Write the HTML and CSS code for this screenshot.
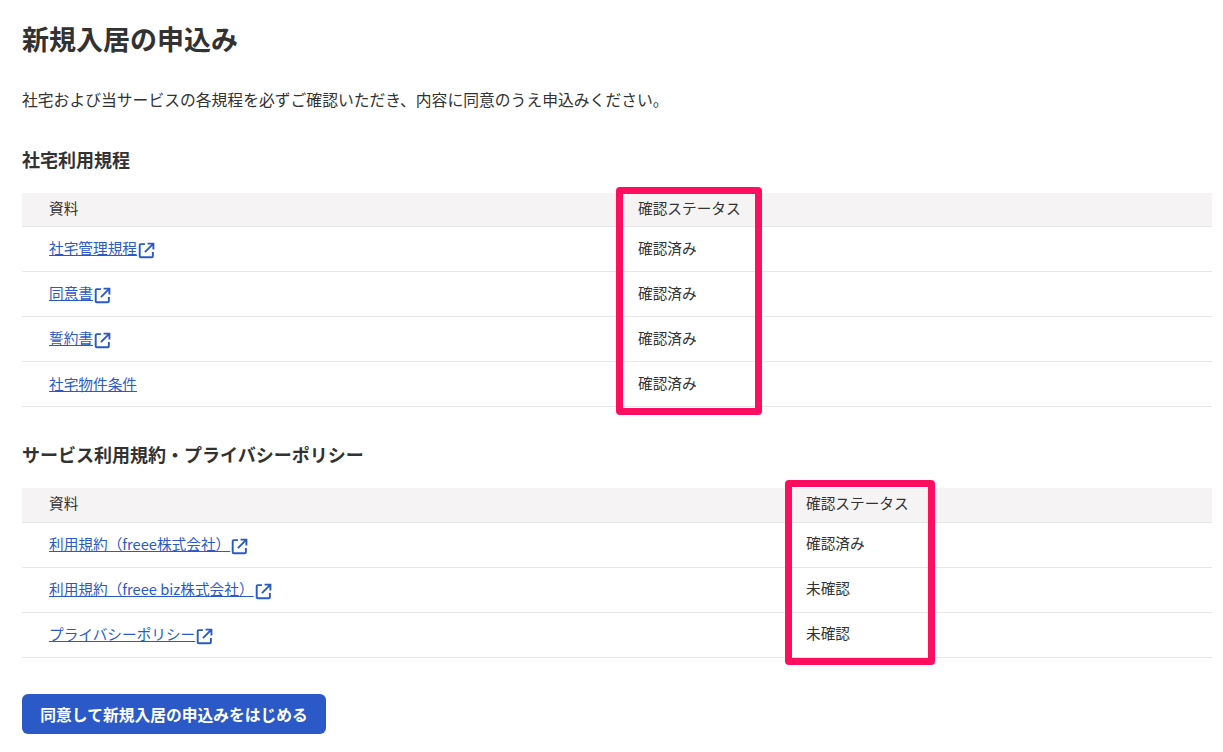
FILE: index.html
```html
<!DOCTYPE html>
<html lang="ja">
<head>
<meta charset="utf-8">
<title>新規入居の申込み</title>
<link rel="stylesheet" href="styles.css">
</head>
<body>
<svg class="defs" width="0" height="0" aria-hidden="true"><symbol id="ext" viewBox="0 0 16 16"><path d="M6.500 2H2.600a1 1 0 0 0-1 1v10.400a1 1 0 0 0 1 1H13a1 1 0 0 0 1-1V9.500" fill="none" stroke="currentColor" stroke-width="1.800"/><path d="M6.500 9.500 13.800 2.200M9 1.500h5.500V7" fill="none" stroke="currentColor" stroke-width="1.800"/></symbol></svg>
<main class="page">
  <h1 class="title">新規入居の申込み</h1>
  <p class="lead">社宅および当サービスの各規程を必ずご確認いただき、内容に同意のうえ申込みください。</p>

  <h2 class="section-title first">社宅利用規程</h2>
  <table class="docs docs-a">
    <thead><tr><th class="c1">資料</th><th class="c2"><span class="status">確認ステータス</span></th></tr></thead>
    <tbody>
      <tr><td class="c1"><a href="#">社宅管理規程</a><svg class="ext"><use href="#ext"/></svg></td><td class="c2">確認済み</td></tr>
      <tr><td class="c1"><a href="#">同意書</a><svg class="ext"><use href="#ext"/></svg></td><td class="c2">確認済み</td></tr>
      <tr><td class="c1"><a href="#">誓約書</a><svg class="ext"><use href="#ext"/></svg></td><td class="c2">確認済み</td></tr>
      <tr><td class="c1"><a href="#">社宅物件条件</a></td><td class="c2">確認済み</td></tr>
    </tbody>
  </table>
  <div class="mark mark-a"></div>

  <h2 class="section-title second">サービス利用規約・プライバシーポリシー</h2>
  <table class="docs docs-b">
    <thead><tr><th class="c1">資料</th><th class="c2"><span class="status">確認ステータス</span></th></tr></thead>
    <tbody>
      <tr><td class="c1"><a href="#">利用規約（freee株式会社）</a><svg class="ext"><use href="#ext"/></svg></td><td class="c2">確認済み</td></tr>
      <tr><td class="c1"><a href="#">利用規約（freee biz株式会社）</a><svg class="ext"><use href="#ext"/></svg></td><td class="c2">未確認</td></tr>
      <tr><td class="c1"><a href="#">プライバシーポリシー</a><svg class="ext"><use href="#ext"/></svg></td><td class="c2">未確認</td></tr>
    </tbody>
  </table>
  <div class="mark mark-b"></div>

  <button class="primary" type="button">同意して新規入居の申込みをはじめる</button>
</main>
</body>
</html>
```
FILE: styles.css
```css
html, body { margin: 0; padding: 0; background: #fff; }
body {
  font-family: "Noto Sans CJK JP", "Noto Sans", sans-serif;
  color: #323232;
  font-size: 14.67px;
  overflow: hidden;
}
.defs { position: absolute; }
.page { position: relative; height: 752px; box-sizing: border-box; padding: 21px 11px 0 22px; }
.title { margin: 0; font-size: 27px; line-height: 36px; font-weight: 700; }
.lead { margin: 25px 0 0; font-size: 15.8px; line-height: 35px; height: 36px; white-space: nowrap; }
.section-title { margin: 0; font-size: 18px; line-height: 24px; font-weight: 700; }
.section-title.first { margin-top: 29px; }
.section-title.second { margin-top: 35px; }
.docs { width: 100%; border-collapse: separate; border-spacing: 0; table-layout: fixed; margin-top: 22px; }
.docs th, .docs td { padding: 0 0 4px; text-align: left; font-weight: 400; font-size: 14.67px; border-bottom: 1px solid #e8e6e6; box-sizing: border-box; }
.docs th { height: 34px; background: #f5f3f3; line-height: 20px; }
.docs td { height: 45px; }
.docs td.c1 { padding-bottom: 2px; }
.docs-b td.c1 { padding-bottom: 3px; }
.docs-b td.c2 { padding-bottom: 6px; }
.docs .c1 { padding-left: 27px; }
.docs .c2 { padding-left: 8px; }
.docs-a .c1 { width: 608px; }
.docs-b .c1 { width: 776px; }
.docs-b th { height: 35px; }
a { color: #2b5ac8; text-decoration: underline; }
.ext { width: 17px; height: 17px; margin-left: 1px; color: #2b5ac8; vertical-align: -5px; }
.mark { position: absolute; box-sizing: border-box; border: 7px solid #ff0d5f; border-radius: 4px; pointer-events: none; }
.mark-a { left: 616px; top: 187px; width: 146px; height: 228px; }
.mark-b { left: 785px; top: 480px; width: 150px; height: 185px; }
.primary {
  display: block; margin-top: 36px; width: 304px; height: 40px; padding: 0;
  border: 0; border-radius: 6px; background: #2b5ac8; color: #fff;
  font-family: inherit; font-size: 15.75px; font-weight: 700;
}
```
